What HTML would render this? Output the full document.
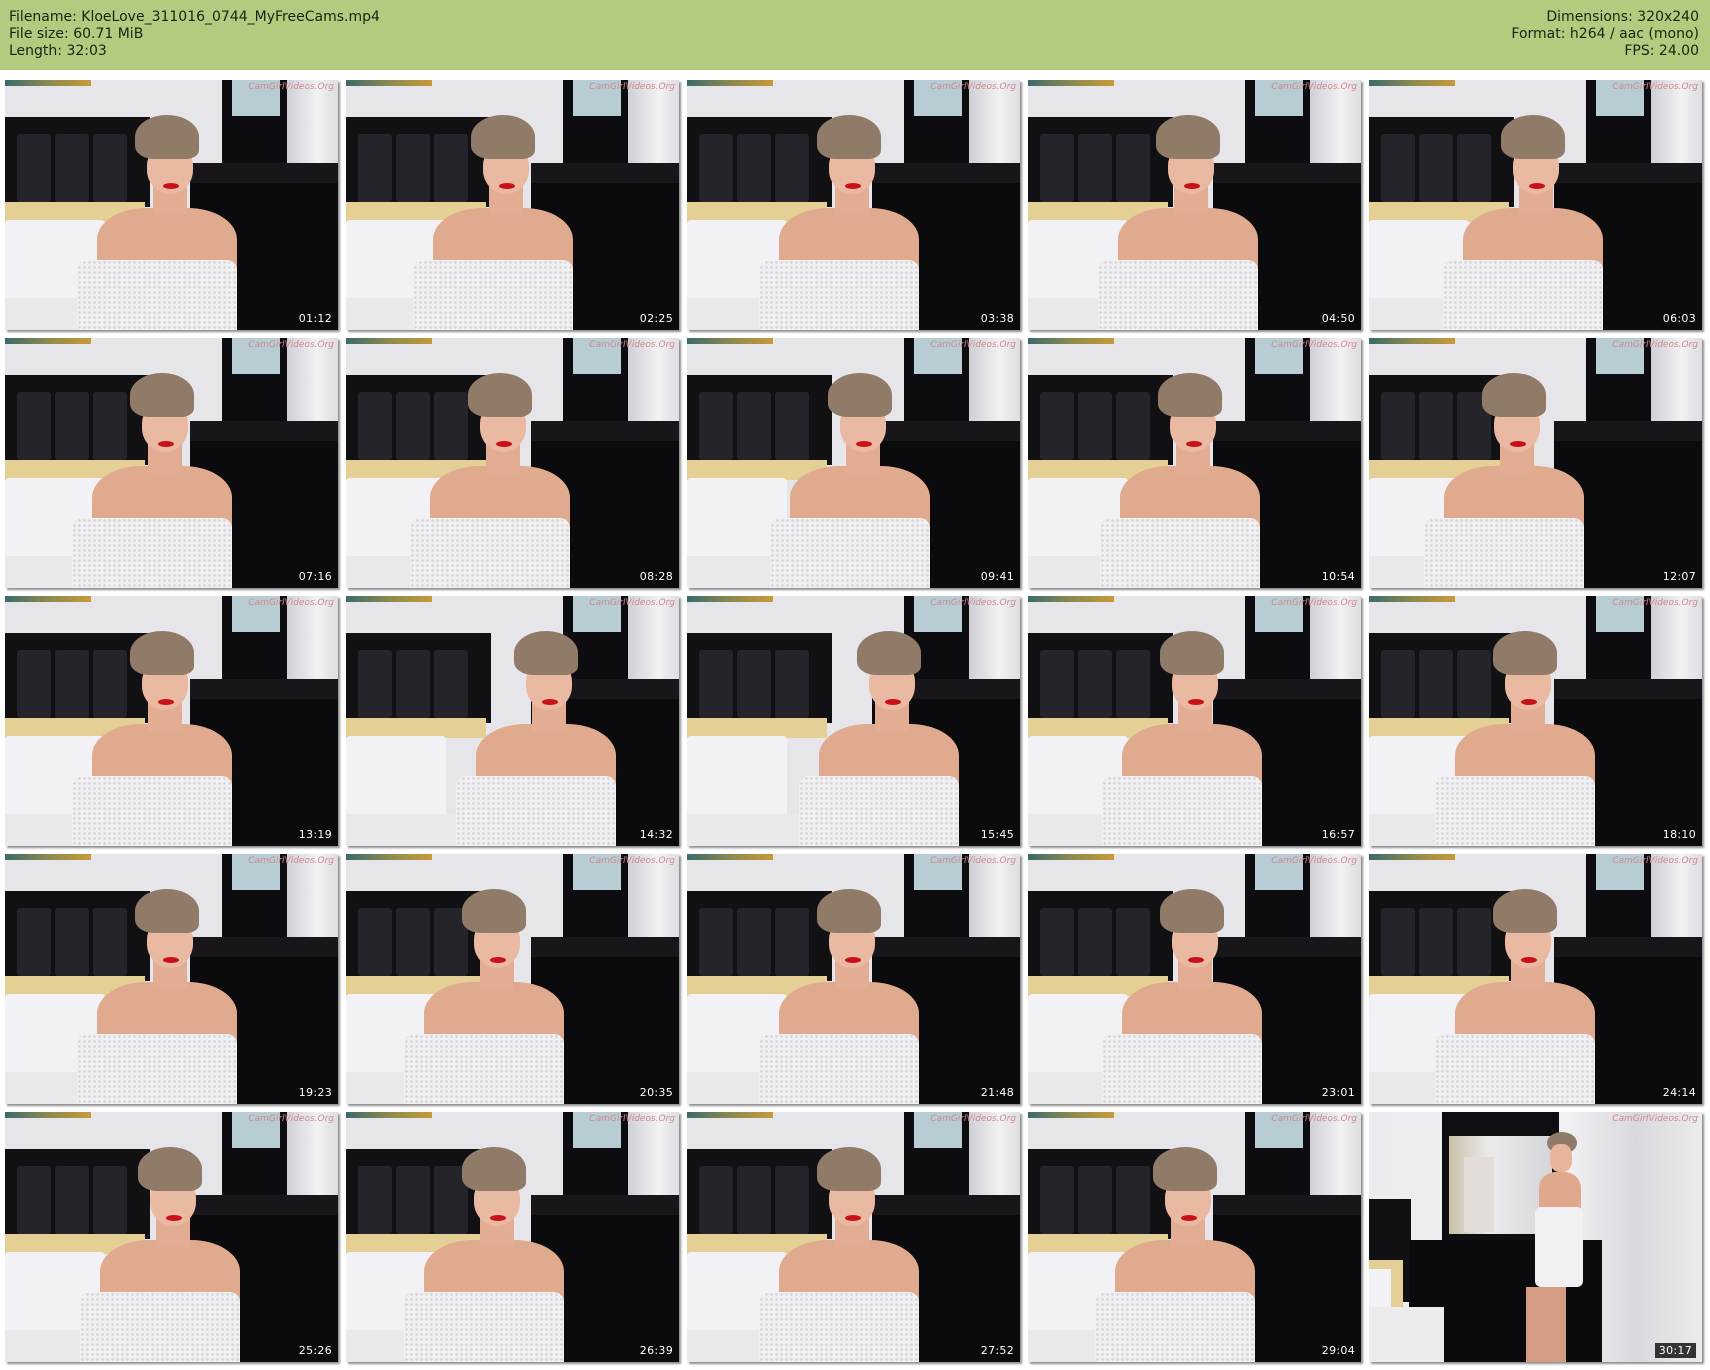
<!DOCTYPE html>
<html><head><meta charset="utf-8"><style>
*{margin:0;padding:0;box-sizing:border-box}
body{width:1710px;height:1370px;background:#fff;position:relative;overflow:hidden;font-family:"DejaVu Sans","Liberation Sans",sans-serif}
.hdr{position:absolute;left:0;top:0;width:1710px;height:70px;background:#b1cc7e;color:#1a2410;font-size:14px;line-height:17px}
.hl{position:absolute;left:9px;top:9px}
.hr{position:absolute;right:11px;top:9px;text-align:right}
.t{position:absolute;width:333px;height:250px;overflow:hidden;background:#e6e6ea;box-shadow:2px 2px 2px rgba(0,0,0,.45)}
.t div{position:absolute}
.pt{left:0;top:0;width:86px;height:6px;background:linear-gradient(90deg,#3d6a6a,#8a8a50,#c79a3a)}
.hb{left:0;top:37px;width:145px;height:90px;background:#111114}
.pn{top:54px;width:34px;height:68px;background:#24242a;border-radius:3px}
.yp{left:0;top:122px;width:140px;height:20px;background:#e4cf95}
.wp{left:0;top:140px;width:100px;height:80px;background:#f2f2f6;border-radius:4px}
.bd{left:0;top:218px;width:190px;height:32px;background:#e9e9ec}
.fr{left:217px;top:0;width:65px;height:100px;background:#0d0c10}
.wn{left:227px;top:0;width:48px;height:36px;background:#b8ccd4}
.rw{left:282px;top:0;width:51px;height:83px;background:linear-gradient(90deg,#cfcfd6,#f2f2f4 60%,#dcdce2)}
.sh{left:185px;top:83px;width:148px;height:22px;background:#18161a}
.ds{left:185px;top:103px;width:148px;height:147px;background:#0b0a0d}
.wm{right:4px;top:2px;font-size:9px;color:#d08a90;font-style:italic}
.hair{top:35px;width:64px;height:44px;background:#8f7b68;border-radius:50% 50% 20% 30%}
.face{top:66px;width:46px;height:48px;background:#e9b9a1;border-radius:40% 40% 50% 50%}
.neck{top:105px;width:34px;height:30px;background:#e2ad93}
.lip{top:103px;width:16px;height:6px;background:#c8121a;border-radius:50%}
.body{top:128px;width:140px;height:90px;background:#e0aa8f;border-radius:35% 35% 8% 8%}
.lace{top:180px;width:160px;height:70px;background:#f0f0f2;border-radius:10px 10px 0 0;background-image:radial-gradient(#d2d2d8 1px,transparent 1.5px);background-size:5px 5px}
.ts{right:6px;bottom:5px;font-size:11px;color:#fff;letter-spacing:.3px}
</style></head><body>
<div class="hdr">
<div class="hl">Filename: KloeLove_311016_0744_MyFreeCams.mp4<br>File size: 60.71 MiB<br>Length: 32:03</div>
<div class="hr">Dimensions: 320x240<br>Format: h264 / aac (mono)<br>FPS: 24.00</div>
</div>
<div id="g"></div>
<script>
var ts=["01:12","02:25","03:38","04:50","06:03","07:16","08:28","09:41","10:54","12:07","13:19","14:32","15:45","16:57","18:10","19:23","20:35","21:48","23:01","24:14","25:26","26:39","27:52","29:04"];
var dx=[0,-5,0,-2,2,-5,-8,11,0,-17,-5,38,40,2,-6,0,-14,0,2,-6,3,-14,0,-5];
var h="";
for(var i=0;i<24;i++){var c=i%5,r=Math.floor(i/5),L=5+c*341,T=80+r*258,d=dx[i];
h+='<div class="t" style="left:'+L+'px;top:'+T+'px">'+
'<div class="pt"></div><div class="fr"></div><div class="wn"></div><div class="rw"></div><div class="sh"></div><div class="ds"></div>'+
'<div class="hb"></div><div class="pn" style="left:12px"></div><div class="pn" style="left:50px"></div><div class="pn" style="left:88px"></div>'+
'<div class="yp"></div><div class="wp"></div><div class="bd"></div>'+
'<div class="body" style="left:'+(92+d)+'px"></div><div class="neck" style="left:'+(148+d)+'px"></div><div class="face" style="left:'+(142+d)+'px"></div><div class="hair" style="left:'+(130+d)+'px"></div><div class="lip" style="left:'+(158+d)+'px"></div>'+
'<div class="lace" style="left:'+(72+d)+'px"></div><div class="wm">CamGirlVideos.Org</div><div class="ts">'+ts[i]+'</div></div>';}
h+='<div class="t" style="left:1369px;top:1112px;background:linear-gradient(90deg,#ececf0 0,#f0f0f3 60%,#d8d8de 80%,#ececef)">'+
'<div style="left:73px;top:0;width:117px;height:130px;background:#0f0e12"></div>'+
'<div style="left:80px;top:24px;width:103px;height:98px;background:linear-gradient(90deg,#c9c2a8,#ebebee 40%,#d5d5da)"></div>'+
'<div style="left:95px;top:45px;width:30px;height:75px;background:#e2ddd8"></div>'+
'<div style="left:0;top:87px;width:42px;height:103px;background:#111114"></div>'+
'<div style="left:40px;top:128px;width:193px;height:122px;background:#0b0a0d"></div>'+
'<div style="left:0;top:148px;width:34px;height:55px;background:#e4cf95"></div>'+
'<div style="left:0;top:157px;width:22px;height:58px;background:#f2f2f6"></div>'+
'<div style="left:0;top:195px;width:75px;height:55px;background:#ececef"></div>'+
'<div style="left:178px;top:20px;width:30px;height:22px;background:#8f7b68;border-radius:50%"></div>'+
'<div style="left:181px;top:32px;width:22px;height:28px;background:#e7b59c;border-radius:40%"></div>'+
'<div style="left:170px;top:60px;width:42px;height:40px;background:#e0a98d;border-radius:40% 40% 5% 5%"></div>'+
'<div style="left:166px;top:95px;width:48px;height:80px;background:#f1f1f3;border-radius:6px"></div>'+
'<div style="left:157px;top:175px;width:40px;height:75px;background:#d49c82"></div>'+
'<div class="wm">CamGirlVideos.Org</div><div class="ts" style="background:#333;padding:1px 4px;right:6px;bottom:4px">30:17</div></div>';
document.getElementById("g").innerHTML=h;
</script>
</body></html>
